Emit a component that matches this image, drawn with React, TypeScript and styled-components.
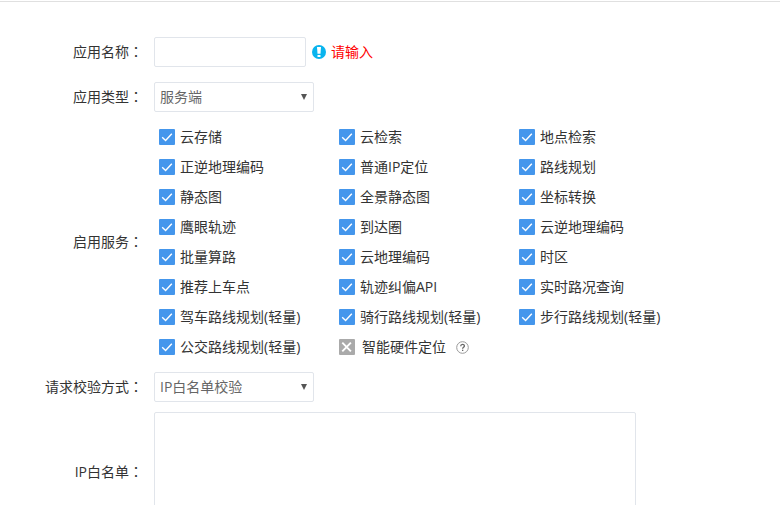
import React from "react";
import styled, { createGlobalStyle } from "styled-components";

const GlobalStyle = createGlobalStyle`
  *, *::before, *::after { box-sizing: border-box; }
  body {
    margin: 0;
    background: #fff;
    color: #333;
    font: 14px/20px "Open Sans", "Noto Sans CJK SC", sans-serif;
  }
  input, select, textarea { font: inherit; color: inherit; }
`;

const Page = styled.main`
  padding-top: 1px;
`;

const Divider = styled.hr`
  height: 1px;
  margin: 0;
  border: 0;
  background: #e0e0e0;
`;

const Form = styled.form`
  display: flex;
  flex-direction: column;
  gap: 10px;
  padding: 35px 16px 20px 0;
`;

const Row = styled.div<{ $spaced?: boolean }>`
  display: grid;
  grid-template-columns: 143px minmax(0, 1fr);
  column-gap: 11px;
  align-items: center;
  margin-bottom: ${(p) => (p.$spaced ? "5px" : "0")};
`;

const labelStyle = `
  display: block;
  text-align: right;
  white-space: nowrap;
`;

const FieldLabel = styled.label`${labelStyle}`;
const GroupLabel = styled.span`${labelStyle}`;

const ColonText = styled.span`
  font-family: "Noto Sans CJK TC", sans-serif;
  line-height: 1;
`;

const Colon = () => <ColonText lang="zh-TW">：</ColonText>;

const Field = styled.div`
  display: flex;
  align-items: center;
`;

const control = `
  border: 1px solid #e1e5eb;
  border-radius: 2px;
  background: #fff;
  outline: none;
  &:focus { border-color: #4496ec; }
`;

const TextInput = styled.input`
  ${control}
  width: 152px;
  height: 30px;
  padding: 0 5px;
`;

const TextArea = styled.textarea`
  ${control}
  display: block;
  width: 482px;
  max-width: 100%;
  height: 120px;
  padding: 5px;
  resize: none;
`;

const SelectBox = styled.div`
  display: grid;
  width: 160px;
  align-items: center;
  > * { grid-area: 1 / 1; }
  > svg { justify-self: end; margin-right: 6px; pointer-events: none; }
`;

const Select = styled.select`
  ${control}
  appearance: none;
  width: 100%;
  height: 30px;
  padding: 0 20px 0 5px;
  color: #666;
`;

const Hint = styled.span`
  display: flex;
  align-items: center;
  gap: 5px;
  margin-left: 6px;
  color: #f00;
`;

const Services = styled.div`
  display: grid;
  grid-template-columns: repeat(3, 180px);
  grid-auto-rows: 30px;
  padding-left: 5px;
`;

const Service = styled.div`
  display: flex;
  align-items: center;
`;

const ServiceLabel = styled.label<{ $off?: boolean }>`
  display: flex;
  align-items: center;
  gap: ${(p) => (p.$off ? "7px" : "5px")};
  white-space: nowrap;
`;

const Tick = styled.span`
  display: grid;
  > * { grid-area: 1 / 1; }
  > svg { pointer-events: none; }
`;

const TickInput = styled.input`
  appearance: none;
  width: 16px;
  height: 16px;
  margin: 0;
  border-radius: 1px;
  background: #4496ec;
  &:disabled { background: #aaa; }
  &:not(:checked):not(:disabled) { background: #fff; border: 1px solid #ccc; }
`;

const HelpButton = styled.button`
  display: flex;
  margin: 0 0 0 10px;
  padding: 0;
  border: 0;
  background: none;
  cursor: help;
`;

const CheckIcon = () => (
  <svg width="16" height="16" viewBox="0 0 16 16" fill="none" stroke="#fff" strokeWidth="1.4" aria-hidden="true">
    <path d="M3.2 8.2 6.6 11.4 12.8 4.8" />
  </svg>
);

const CrossIcon = () => (
  <svg width="16" height="16" viewBox="0 0 16 16" fill="none" stroke="#fff" strokeWidth="1.9" aria-hidden="true">
    <path d="M3.3 3.6 11.9 12.4M11.9 3.6 3.3 12.4" />
  </svg>
);

const ArrowIcon = () => (
  <svg width="8" height="8" viewBox="0 0 8 8" aria-hidden="true">
    <path d="M1 1H7L4 7Z" fill="#555" />
  </svg>
);

const AlertIcon = () => (
  <svg width="14" height="14" viewBox="0 0 14 14" aria-hidden="true">
    <circle cx="7" cy="7" r="7" fill="#09b4ee" />
    <path d="M5 2H9L8.5 8.8H5.5Z" fill="#fff" />
    <rect x="5.5" y="10" width="3" height="2" fill="#fff" />
  </svg>
);

const HelpIcon = () => (
  <svg width="13" height="13" viewBox="0 0 13 13" fill="none" aria-hidden="true">
    <circle cx="6.5" cy="6.5" r="5.8" stroke="#999" strokeWidth="1" />
    <path d="M4.7 5.2C4.7 2.8 8.4 2.9 8.4 5C8.4 6.3 6.6 6.3 6.6 7.8" stroke="#666" strokeWidth="1.3" />
    <rect x="6" y="8.7" width="1.3" height="1.3" fill="#666" />
  </svg>
);

const services = [
  "云存储", "云检索", "地点检索",
  "正逆地理编码", "普通IP定位", "路线规划",
  "静态图", "全景静态图", "坐标转换",
  "鹰眼轨迹", "到达圈", "云逆地理编码",
  "批量算路", "云地理编码", "时区",
  "推荐上车点", "轨迹纠偏API", "实时路况查询",
  "驾车路线规划(轻量)", "骑行路线规划(轻量)", "步行路线规划(轻量)",
  "公交路线规划(轻量)",
];

export default function App() {
  return (
    <>
      <GlobalStyle />
      <Page lang="zh-CN">
        <Divider />
        <Form>
          <Row $spaced>
            <FieldLabel htmlFor="name">应用名称<Colon /></FieldLabel>
            <Field>
              <TextInput id="name" type="text" aria-describedby="name-hint" />
              <Hint id="name-hint"><AlertIcon />请输入</Hint>
            </Field>
          </Row>
          <Row>
            <FieldLabel htmlFor="type">应用类型<Colon /></FieldLabel>
            <SelectBox>
              <Select id="type" defaultValue="server">
                <option value="server">服务端</option>
              </Select>
              <ArrowIcon />
            </SelectBox>
          </Row>
          <Row role="group" aria-labelledby="services">
            <GroupLabel id="services">启用服务<Colon /></GroupLabel>
            <Services>
              {services.map((name) => (
                <Service key={name}>
                  <ServiceLabel>
                    <Tick><TickInput type="checkbox" defaultChecked /><CheckIcon /></Tick>
                    {name}
                  </ServiceLabel>
                </Service>
              ))}
              <Service>
                <ServiceLabel $off>
                  <Tick><TickInput type="checkbox" disabled /><CrossIcon /></Tick>
                  智能硬件定位
                </ServiceLabel>
                <HelpButton type="button" aria-label="帮助"><HelpIcon /></HelpButton>
              </Service>
            </Services>
          </Row>
          <Row>
            <FieldLabel htmlFor="verify">请求校验方式<Colon /></FieldLabel>
            <SelectBox>
              <Select id="verify" defaultValue="ip">
                <option value="ip">IP白名单校验</option>
              </Select>
              <ArrowIcon />
            </SelectBox>
          </Row>
          <Row>
            <FieldLabel htmlFor="whitelist">IP白名单<Colon /></FieldLabel>
            <TextArea id="whitelist" />
          </Row>
        </Form>
      </Page>
    </>
  );
}
